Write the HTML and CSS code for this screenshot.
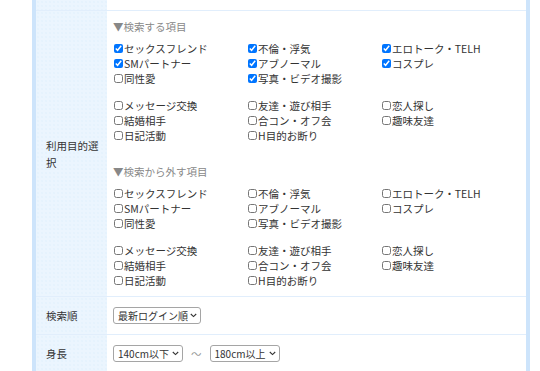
FILE: index.html
```html
<!DOCTYPE html>
<html>
  <head>
    <title>検索条件</title>
    <meta name="viewport" content="width=device-width, initial-scale=1.0">
    <link rel="stylesheet" href="styles.css">
  </head>
  <body>
    <div class="search-table">
      <div class="row row-cut">
        <div class="label"></div>
        <div class="cell"></div>
      </div>

      <div class="row">
        <div class="label">利用目的選択</div>
        <div class="cell cell-purpose">
          <div class="group-title">▼検索する項目</div>
          <div class="opts">
            <label><input type="checkbox" checked>セックスフレンド</label>
            <label><input type="checkbox" checked>不倫・浮気</label>
            <label><input type="checkbox" checked>エロトーク・TELH</label>
            <label><input type="checkbox" checked>SMパートナー</label>
            <label><input type="checkbox" checked>アブノーマル</label>
            <label><input type="checkbox" checked>コスプレ</label>
            <label><input type="checkbox">同性愛</label>
            <label><input type="checkbox" checked>写真・ビデオ撮影</label>
          </div>
          <div class="opts">
            <label><input type="checkbox">メッセージ交換</label>
            <label><input type="checkbox">友達・遊び相手</label>
            <label><input type="checkbox">恋人探し</label>
            <label><input type="checkbox">結婚相手</label>
            <label><input type="checkbox">合コン・オフ会</label>
            <label><input type="checkbox">趣味友達</label>
            <label><input type="checkbox">日記活動</label>
            <label><input type="checkbox">H目的お断り</label>
          </div>

          <div class="group-title group-second">▼検索から外す項目</div>
          <div class="opts">
            <label><input type="checkbox">セックスフレンド</label>
            <label><input type="checkbox">不倫・浮気</label>
            <label><input type="checkbox">エロトーク・TELH</label>
            <label><input type="checkbox">SMパートナー</label>
            <label><input type="checkbox">アブノーマル</label>
            <label><input type="checkbox">コスプレ</label>
            <label><input type="checkbox">同性愛</label>
            <label><input type="checkbox">写真・ビデオ撮影</label>
          </div>
          <div class="opts">
            <label><input type="checkbox">メッセージ交換</label>
            <label><input type="checkbox">友達・遊び相手</label>
            <label><input type="checkbox">恋人探し</label>
            <label><input type="checkbox">結婚相手</label>
            <label><input type="checkbox">合コン・オフ会</label>
            <label><input type="checkbox">趣味友達</label>
            <label><input type="checkbox">日記活動</label>
            <label><input type="checkbox">H目的お断り</label>
          </div>
        </div>
      </div>

      <div class="row">
        <div class="label">検索順</div>
        <div class="cell cell-inline">
          <span class="select-wrap">
            <select>
              <option>最新ログイン順</option>
            </select>
            <svg class="chev" width="7" height="5" viewBox="0 0 7 5"><path d="M0.8 1 L3.5 3.6 L6.2 1" fill="none" stroke="#333" stroke-width="1.1"/></svg>
          </span>
        </div>
      </div>

      <div class="row">
        <div class="label">身長</div>
        <div class="cell cell-inline">
          <span class="select-wrap">
            <select>
              <option>140cm以下</option>
            </select>
            <svg class="chev" width="7" height="5" viewBox="0 0 7 5"><path d="M0.8 1 L3.5 3.6 L6.2 1" fill="none" stroke="#333" stroke-width="1.1"/></svg>
          </span>
          <span class="tilde">〜</span>
          <span class="select-wrap">
            <select>
              <option>180cm以上</option>
            </select>
            <svg class="chev" width="7" height="5" viewBox="0 0 7 5"><path d="M0.8 1 L3.5 3.6 L6.2 1" fill="none" stroke="#333" stroke-width="1.1"/></svg>
          </span>
        </div>
      </div>
    </div>
  </body>
</html>
```

FILE: styles.css
```css
body {
  margin: 0;
  padding: 0;
  background-color: #fff;
  color: #333;
  font-family: "Noto Sans CJK JP", "Noto Sans", sans-serif;
  font-size: 10.5px;
}
.search-table {
  width: 498px;
  margin-left: 32px;
  border-left: 4px solid #cde4fb;
  border-right: 4px solid #cde4fb;
  box-sizing: border-box;
}
.row {
  display: grid;
  grid-template-columns: 71px 1fr;
  border-bottom: 1px solid #e1eefc;
}
.row-cut {
  height: 10px;
}
.label {
  background-color: #ebf5fe;
  background-image: radial-gradient(circle, #dfeefc 0.6px, transparent 0.8px);
  background-size: 4px 4px;
  padding: 0 8px 0 10px;
  display: flex;
  align-items: center;
  line-height: 17px;
}
.cell {
  padding: 0 6px;
}
.cell-purpose {
  padding-top: 8px;
  padding-bottom: 8px;
}
.group-title {
  color: #888;
  line-height: 15px;
  margin-bottom: 7px;
}
.group-second {
  margin-top: 21px;
}
.opts {
  display: grid;
  grid-template-columns: repeat(3, 134px);
  line-height: 15px;
}
.opts + .opts {
  margin-top: 12px;
}
.opts label {
  display: flex;
  align-items: center;
  white-space: nowrap;
}
.opts input {
  width: 9px;
  height: 9px;
  margin: 0 1px 0 1px;
}
.cell-inline {
  display: flex;
  align-items: center;
  height: 37px;
}
.select-wrap {
  position: relative;
  display: inline-block;
}
.select-wrap select {
  appearance: none;
  -webkit-appearance: none;
  font-family: inherit;
  font-size: 10px;
  line-height: 14px;
  color: #333;
  height: 17px;
  padding: 0 12px 0 4px;
  border: 1px solid #a5a5a5;
  border-radius: 3px;
  background-color: #fff;
  display: block;
}
.chev {
  position: absolute;
  right: 4px;
  top: 6px;
  pointer-events: none;
}
.tilde {
  color: #999;
  margin: 0 8px;
}
```
